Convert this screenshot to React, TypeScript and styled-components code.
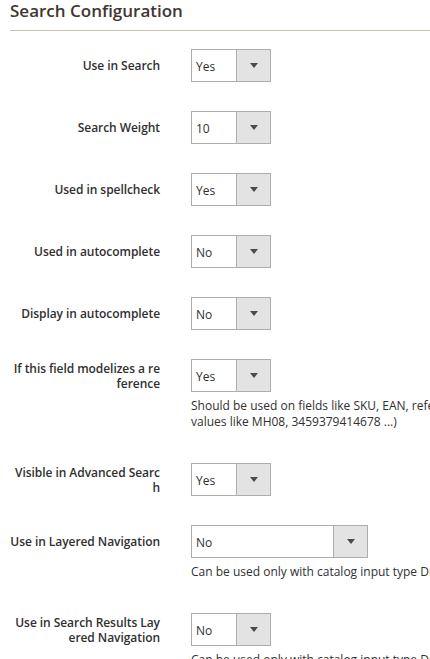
import React from "react";
import styled, { createGlobalStyle } from "styled-components";

const GlobalStyle = createGlobalStyle`
  html, body {
    margin: 0;
    padding: 0;
    background: #ffffff;
    overflow: hidden;
  }
  body {
    width: 430px;
    font-family: "Open Sans", "Noto Sans", Arial, sans-serif;
    color: #303030;
  }
`;

const Page = styled.div`
  padding-left: 10px;
`;

const Legend = styled.h2`
  margin: 0;
  padding-top: 1px;
  font-size: 17px;
  line-height: 20px;
  font-weight: 600;
  color: #41362f;
  white-space: nowrap;
`;

const Divider = styled.div`
  height: 1px;
  margin-top: 9px;
  background: #cac3b4;
`;

const Fields = styled.div`
  padding-top: 18px;
  display: flex;
  flex-direction: column;
  gap: 29px;
`;

const Field = styled.div`
  display: grid;
  grid-template-columns: 150px auto;
  column-gap: 31px;
  align-items: start;
`;

const Label = styled.label`
  min-height: 33px;
  display: flex;
  align-items: center;
  justify-content: flex-end;
  text-align: right;
  font-size: 12px;
  line-height: 15px;
  font-weight: 600;
  letter-spacing: -0.06px;
  color: #303030;
  word-break: break-all;
`;

const Control = styled.div`
  display: flex;
  flex-direction: column;
  align-items: flex-start;
`;

const Select = styled.div<{ $wide?: boolean }>`
  box-sizing: border-box;
  width: ${({ $wide }) => ($wide ? "177px" : "80px")};
  height: 33px;
  display: flex;
  border: 1px solid #adadad;
  background: #ffffff;
`;

const Value = styled.span`
  flex: 1;
  padding: 2px 0 0 4px;
  display: flex;
  align-items: center;
  font-size: 12px;
  color: #303030;
`;

const ArrowCell = styled.span`
  width: 33px;
  display: flex;
  align-items: center;
  justify-content: center;
  background: #e3e3e3;
  border-left: 1px solid #adadad;

  &::after {
    content: "";
    width: 0;
    height: 0;
    border-left: 4px solid transparent;
    border-right: 4px solid transparent;
    border-top: 5px solid #514943;
  }
`;

const Note = styled.div`
  padding: 6px 0 4px;
  font-size: 12px;
  line-height: 16px;
  color: #303030;
  white-space: nowrap;
`;

type Row = {
  label: string;
  value: string;
  wide?: boolean;
  note?: React.ReactNode;
};

const rows: Row[] = [
  { label: "Use in Search", value: "Yes" },
  { label: "Search Weight", value: "10" },
  { label: "Used in spellcheck", value: "Yes" },
  { label: "Used in autocomplete", value: "No" },
  { label: "Display in autocomplete", value: "No" },
  {
    label: "If this field modelizes a reference",
    value: "Yes",
    note: (
      <>
        Should be used on fields like SKU, EAN, references, ... (fields containing
        <br />
        values like MH08, 3459379414678 ...)
      </>
    ),
  },
  { label: "Visible in Advanced Search", value: "Yes" },
  {
    label: "Use in Layered Navigation",
    value: "No",
    wide: true,
    note: "Can be used only with catalog input type Dropdown, Multiple Select and Price.",
  },
  {
    label: "Use in Search Results Layered Navigation",
    value: "No",
    note: "Can be used only with catalog input type Dropdown, Multiple Select and Price.",
  },
];

export default function App() {
  return (
    <>
      <GlobalStyle />
      <Page>
        <Legend>Search Configuration</Legend>
        <Divider />
        <Fields>
          {rows.map((row) => (
            <Field key={row.label}>
              <Label>{row.label}</Label>
              <Control>
                <Select $wide={row.wide}>
                  <Value>{row.value}</Value>
                  <ArrowCell />
                </Select>
                {row.note && <Note>{row.note}</Note>}
              </Control>
            </Field>
          ))}
        </Fields>
      </Page>
    </>
  );
}
